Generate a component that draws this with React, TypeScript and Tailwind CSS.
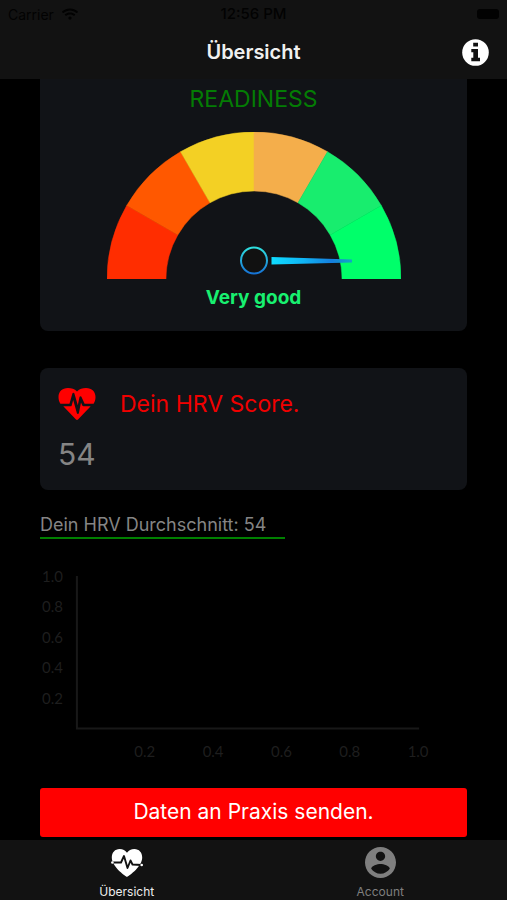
import { FaWifi } from "react-icons/fa";

const yTicks = ["1.0", "0.8", "0.6", "0.4", "0.2"];
const xTicks = ["0.2", "0.4", "0.6", "0.8", "1.0"];

// centre of the gauge is 147/147, outer radius 147, inner radius 88
const segments = [
  { color: "#ff2d00", d: "M0 147A147 147 0 0 1 19.7 73.5L70.8 103A88 88 0 0 0 59 147Z" },
  { color: "#ff5800", d: "M19.7 73.5A147 147 0 0 1 73.5 19.7L103 70.8A88 88 0 0 0 70.8 103Z" },
  { color: "#f3d024", d: "M73.5 19.7A147 147 0 0 1 147 0V59A88 88 0 0 0 103 70.8Z" },
  { color: "#f4ae4b", d: "M147 0A147 147 0 0 1 220.5 19.7L191 70.8A88 88 0 0 0 147 59Z" },
  { color: "#18ed6e", d: "M220.5 19.7A147 147 0 0 1 274.3 73.5L223.2 103A88 88 0 0 0 191 70.8Z" },
  { color: "#00ff6a", d: "M274.3 73.5A147 147 0 0 1 294 147H235A88 88 0 0 0 223.2 103Z" },
];

function Gauge() {
  return (
    <svg viewBox="0 0 294 147" className="w-[294px] max-w-full" aria-hidden="true">
      <defs>
        <linearGradient id="hub" x1="0" y1="0" x2="0" y2="1">
          <stop offset="0" stopColor="#2fe0e0" />
          <stop offset="1" stopColor="#1673d6" />
        </linearGradient>
        <linearGradient id="needle" x1="0" y1="0" x2="1" y2="0">
          <stop offset="0" stopColor="#0fdcff" />
          <stop offset="0.4" stopColor="#10b4f5" />
          <stop offset="0.75" stopColor="#157ede" />
          <stop offset="1" stopColor="#10a8c4" />
        </linearGradient>
      </defs>
      {segments.map((s) => (
        <path key={s.color} d={s.d} fill={s.color} stroke={s.color} strokeWidth="0.5" />
      ))}
      <circle cx="147" cy="128.5" r="13" fill="#111111" stroke="url(#hub)" strokeWidth="2" />
      <path d="M164.5 125L245 127.5V130.5L164.5 132.5Z" fill="url(#needle)" />
    </svg>
  );
}

function InfoIcon() {
  return (
    <svg viewBox="0 0 27 27" className="w-[27px] h-[27px]" aria-hidden="true">
      <circle cx="13.5" cy="13.5" r="13.3" fill="#fff" />
      <path d="M11.2 3.8H16V7.4H11.2ZM9.300 10H16V18.800H18V22.300H9.300V18.800H11.300V13.300H9.300Z" fill="#121212" />
    </svg>
  );
}

function HeartbeatIcon() {
  return (
    <svg viewBox="0 0 38 34" className="w-[38px] h-[34px]" aria-hidden="true">
      <path
        d="M19 4.500C21.500 1.800 24.500 1 28 1C34 1 37.500 4.800 37.500 10C37.500 12.800 36.800 14.800 35.600 16.700H26.600L23.400 9.800C23 9 21.800 9.100 21.500 10L19.800 18.200L16.400 6.500C16.100 5.600 14.700 5.600 14.400 6.600L11.500 16.700H2.400C1.200 14.800 0.500 12.800 0.500 10C0.500 4.800 4 1 10 1C13.500 1 16.500 1.800 19 4.500Z"
        fill="#ff0000"
      />
      <path
        d="M5.300 19.300H12.500C13.100 19.300 13.500 19 13.700 18.400L15.200 13L18.900 26.200C19.200 27.200 20.700 27.200 20.900 26.100L23 15.600L24.300 18.500C24.500 19 25 19.300 25.500 19.300H32.700L20 32.500C19.400 33.100 18.600 33.100 18 32.500Z"
        fill="#ff0000"
      />
    </svg>
  );
}

function HeartPulseIcon() {
  return (
    <svg viewBox="0 0 34 30" className="w-[34px] h-[30px]" aria-hidden="true">
      <path
        d="M17 29C14 27 1.8 18.5 1.8 9.5C1.8 4.500 5 1 9.600 1C12.800 1 15.500 2.500 17 4.800C18.500 2.500 21.200 1 24.400 1C29 1 32.200 4.500 32.200 9.500C32.200 18.500 20 27 17 29Z"
        fill="#fff"
      />
      <path
        d="M2.500 14.500H11L14 8L17.500 20L20.500 12.500L22.500 16.500L31.500 17"
        fill="none"
        stroke="#121212"
        strokeWidth="1.9"
        strokeLinejoin="round"
      />
      <circle cx="2.400" cy="14.500" r="1.300" fill="#fff" />
      <circle cx="31.700" cy="17" r="1.300" fill="#fff" />
    </svg>
  );
}

function AccountIcon() {
  return (
    <svg viewBox="2 2 20 20" className="w-[31px] h-[31px]" fill="currentColor" aria-hidden="true">
      <path d="M12 2C6.48 2 2 6.48 2 12s4.48 10 10 10 10-4.48 10-10S17.52 2 12 2zm0 3c1.66 0 3 1.34 3 3s-1.34 3-3 3-3-1.34-3-3 1.34-3 3-3zm0 14.2c-2.5 0-4.71-1.28-6-3.22.03-1.99 4-3.08 6-3.08 1.99 0 5.97 1.09 6 3.08-1.29 1.94-3.5 3.22-6 3.22z" />
    </svg>
  );
}

function Chart() {
  return (
    <svg viewBox="0 -8 428 205" className="w-full text-[15px] font-[Lato,sans-serif]" fill="#1e1e1e">
      <path d="M37 5V158H380" fill="none" stroke="#181818" strokeWidth="2" />
      {yTicks.map((t, i) => (
        <text key={t} x="23" y={11 + i * 30.5} textAnchor="end">
          {t}
        </text>
      ))}
      {xTicks.map((t, i) => (
        <text key={t} x={105 + i * 68.5} y="186" textAnchor="middle">
          {t}
        </text>
      ))}
    </svg>
  );
}

export default function App() {
  return (
    <div className="min-h-screen flex flex-col bg-black font-[Inter,sans-serif]">
      <header className="bg-[#121212] h-[79px]">
        <div className="grid grid-cols-3 items-center h-7 px-2 text-[14px] text-[#020202]">
          <span className="flex items-center gap-2">
            Carrier <FaWifi size={16} />
          </span>
          <span className="text-center text-[15px] font-medium">12:56 PM</span>
          <span className="justify-self-end w-[22px] h-[10px] rounded-[3px] bg-[#020202]" />
        </div>
        <div className="grid grid-cols-[1fr_auto_1fr] items-center h-12 px-[18px]">
          <h1 className="col-start-2 text-[20px] font-semibold text-[#f0f0f0]">Übersicht</h1>
          <button aria-label="Info" className="justify-self-end">
            <InfoIcon />
          </button>
        </div>
      </header>

      <main className="flex-1 flex flex-col px-10">
        <section className="flex flex-col items-center h-[252px] rounded-b-lg bg-[#111317]">
          <h2 className="mt-1 mb-[17px] text-[23px] leading-8 text-[#047c04]">READINESS</h2>
          <Gauge />
          <p className="mt-[3px] text-[19px] leading-8 font-bold text-[#18f070]">Very good</p>
        </section>

        <section className="mt-[37px] h-[122px] px-[18px] pt-[18px] rounded-lg bg-[#111317]">
          <div className="flex items-center gap-6 h-9">
            <HeartbeatIcon />
            <h2 className="text-[23px] text-[#f00000]">Dein HRV Score.</h2>
          </div>
          <p className="mt-3 text-[30px] leading-10 text-[#858585]">54</p>
        </section>

        <p className="self-start w-[245px] mt-[23px] border-b-2 border-[#008000] text-[18px] leading-6 text-[#858585]">
          Dein HRV Durchschnitt: 54
        </p>

        <div className="mt-6">
          <Chart />
        </div>

        <button className="mt-5 mb-[2px] h-[49px] rounded-[3px] bg-[#ff0000] text-[21px] text-white">
          Daten an Praxis senden.
        </button>
      </main>

      <nav className="grid grid-cols-2 h-[60px] bg-[#121212] text-[12px] leading-4">
        <a href="#" className="flex flex-col items-center justify-end gap-[6px] text-[#eeeeee]">
          <HeartPulseIcon />
          Übersicht
        </a>
        <a href="#" className="flex flex-col items-center justify-end gap-[6px] text-[#7f7f7f]">
          <AccountIcon />
          Account
        </a>
      </nav>
    </div>
  );
}
